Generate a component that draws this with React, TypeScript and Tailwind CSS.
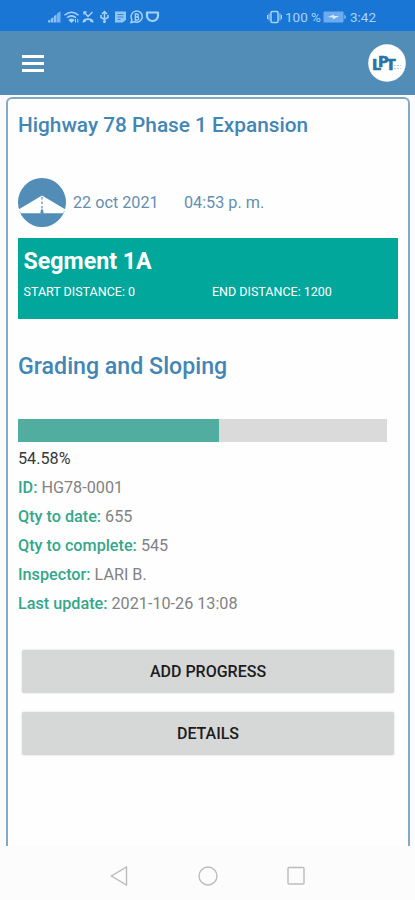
import type { ReactNode } from "react";

interface DetailRow {
  label: string;
  value: string;
}

const details: DetailRow[] = [
  { label: "ID:", value: "HG78-0001" },
  { label: "Qty to date:", value: "655" },
  { label: "Qty to complete:", value: "545" },
  { label: "Inspector:", value: "LARI B." },
  { label: "Last update:", value: "2021-10-26 13:08" },
];

const progress = 54.58;

function StatusBar() {
  return (
    <div className="flex h-[31px] shrink-0 items-center bg-[#1976d5] pt-[2px] pl-[48px] text-[#a9d2fb]">
      {/* Signal, wifi and notification icons */}
      <svg width="112" height="14" viewBox="0 0 112 14" fill="none" stroke="currentColor">
        <g fill="currentColor" stroke="none">
          <path d="M0 12.500v-2l2.500-1v3zM3 12.500V8.500l2.500-1.200v5.200zM6 12.500V6l2.500-1.500v8z" opacity=".8" />
          <path d="M9 12.500V3.500l3.500-2.500v11.500z" opacity=".65" />
        </g>
        <g strokeWidth="1.500">
          <path d="M16.500 5.200q7-6 14 0M19 7.800q4.500-3.800 9 0" />
          <path d="M21.500 10q2-1.500 4 0l-2 2z" fill="currentColor" />
          <path d="M27.500 9v3.500M29.800 9v3.500" strokeWidth="1" />
        </g>
        <path d="M36 2l4 4.500 4.500-4.500M36 4.500v-2.500h2.500" strokeWidth="1.300" />
        <path d="M34.500 12.500q0-4.300 5.500-4.300t5.700 4.300l-3.200-.6-.5-1.700h-4l-.5 1.700z" fill="currentColor" stroke="none" />
        <path d="M56.500 2v9M53 5v2.500l3.500 2 3.500-2V5M54 4l2.500-2.500 2.500 2.500" strokeWidth="1.500" />
        <circle cx="56.500" cy="11.500" r="1.500" fill="currentColor" stroke="none" />
        <path d="M67 1.500h11v8l-3 3h-8z" fill="currentColor" stroke="none" opacity=".85" />
        <path d="M69.500 4.500h6M69.500 7h6M69.500 9.500h3" stroke="#1976d5" strokeWidth=".8" />
        <path d="M83 12.500l.9-3a5.600 5.600 0 1 1 2.500 2.200z" strokeWidth="1.400" />
        <path d="M87.300 4v6h2a1.500 1.500 0 0 0 0-3h-2 1.500a1.500 1.500 0 0 0 0-3z" strokeWidth="1.300" />
        <path d="M99 2.500h11v3.500a5.500 5 0 0 1-11 0z" strokeWidth="2.200" strokeLinejoin="round" />
      </svg>
      <svg className="ml-[107px]" width="15" height="14" viewBox="0 0 15 14" fill="none" stroke="currentColor">
        <rect x="4" y="1.500" width="7" height="11" rx="1" strokeWidth="1.500" />
        <path d="M2 3.500v7M13 3.500v7M.5 5v4M14.500 5v4" />
      </svg>
      <span className="ml-[3px] w-[38px] text-[13.500px] leading-[14px] whitespace-nowrap">100 %</span>
      <svg width="24" height="12" viewBox="0 0 24 12">
        <rect x="0.500" y="0.500" width="20" height="11" rx="1" fill="#6eabec" />
        <path d="M21.500 3.500q2.500 2.500 0 5z" fill="#a9d2fb" />
        <path d="M5 6l6-2.500v1.500h5l-6 3.500v-2z" fill="#d9ecff" />
      </svg>
      <span className="ml-[3px] text-[13.500px] leading-[14px]">3:42</span>
    </div>
  );
}

function AppBar() {
  return (
    <header className="flex h-[64px] shrink-0 items-center justify-between bg-[#528db8] pr-[9px] pl-[22px]">
      <button className="flex w-[22px] flex-col gap-[4px]" aria-label="Open menu">
        <span className="h-[3px] w-full bg-white"></span>
        <span className="h-[3px] w-full bg-white"></span>
        <span className="h-[3px] w-full bg-white"></span>
      </button>
      <svg width="38" height="38" viewBox="0 0 38 38">
        <circle cx="19" cy="19" r="18.800" fill="#fff" />
        <text
          x="4.500"
          y="25.500"
          fill="#2b75a3"
          stroke="#2b75a3"
          strokeWidth=".7"
          fontFamily="Roboto, sans-serif"
          fontWeight="900"
          fontSize="15.500"
          letterSpacing="-2.500"
        >
          L<tspan dy="-2.500">P</tspan><tspan dy="3">T</tspan>
        </text>
        <path d="M26 21.500h7M26 24.500h7" stroke="#c6d1d9" strokeDasharray="2 1" />
      </svg>
    </header>
  );
}

function RoadIcon() {
  return (
    <svg width="48" height="49" viewBox="0 0 48 49">
      <ellipse cx="24" cy="24.500" rx="24" ry="24.500" fill="#528db8" />
      <path d="M24 17.500L47.500 31.500 45 35.200H3L.5 31.500z" fill="#fff" />
      <path d="M24 19v16" stroke="#528db8" strokeWidth="1.200" strokeDasharray="2.500 2" />
      <path d="M23 31.500h2l.7 4h-3.400z" fill="#528db8" />
    </svg>
  );
}

function ActionButton({ children }: { children: ReactNode }) {
  return (
    <button className="h-[43px] w-full rounded-[2px] bg-[#d6d8d7] text-[16px] font-medium text-[#1c1c1c] shadow-[0_0_2px_rgba(0,0,0,0.2)]">
      {children}
    </button>
  );
}

export default function App() {
  return (
    <div className="flex h-[900px] w-[415px] flex-col overflow-hidden bg-white font-[Roboto,sans-serif]">
      <StatusBar />
      <AppBar />

      {/* Activity card, runs off under the navigation bar */}
      <main className="flex flex-1 flex-col bg-[#fbfafd] px-[5.500px] pt-[2px]">
        <section className="flex-1 rounded-t-[6px] border-2 border-b-0 border-[#84a9c6] bg-[#fefefe] pr-[9px] pl-[10.500px]">
          <h1 className="pt-[14px] text-[20.800px] leading-[24px] font-medium whitespace-nowrap text-[#4386b5]">
            Highway 78 Phase 1 Expansion
          </h1>

          <div className="mt-[41px] flex items-center text-[16.200px] text-[#658fb1]">
            <RoadIcon />
            <span className="ml-[7px] w-[111px] pt-[2px]">22 oct 2021</span>
            <span className="pt-[2px]">04:53 p. m.</span>
          </div>

          <div className="mt-[11px] h-[81px] w-[380px] bg-[#02a79c] px-[5.500px] text-white">
            <h2 className="pt-[9px] text-[23.200px] leading-[28px] font-bold">Segment 1A</h2>
            <div className="mt-[9px] flex text-[12.500px] leading-[16px]">
              <span className="w-[188.500px]">START DISTANCE: 0</span>
              <span>END DISTANCE: 1200</span>
            </div>
          </div>

          <h2 className="mt-[33px] text-[23.200px] leading-[28px] font-medium text-[#4386b5]">
            Grading and Sloping
          </h2>

          <div className="mt-[39px] h-[23px] w-[369px] bg-[#dadada]">
            <div className="h-full bg-[#51ad9f]" style={{ width: `${progress}%` }}></div>
          </div>

          <div className="mt-[3px] text-[16.200px] leading-[28.900px] text-[#828282]">
            <p className="text-[#383838]">{progress}%</p>
            {details.map((row) => (
              <p key={row.label}>
                <span className="font-medium text-[#35a78c]">{row.label}</span> {row.value}
              </p>
            ))}
          </div>

          <div className="mt-[32px] ml-[4px] flex w-[372px] flex-col gap-[19px]">
            <ActionButton>ADD PROGRESS</ActionButton>
            <ActionButton>DETAILS</ActionButton>
          </div>
        </section>
      </main>

      {/* Android navigation bar */}
      <nav className="flex h-[54px] shrink-0 items-center justify-center bg-[#fcfcfc] pt-[5px]">
        <svg width="200" height="22" viewBox="0 0 200 22" fill="none" stroke="#bcbcbc" strokeWidth="1.400">
          <path d="M18.500 2v18L3.500 11z" />
          <circle cx="100" cy="11" r="9" />
          <rect x="180" y="2.500" width="16" height="16.500" rx="1" />
        </svg>
      </nav>
    </div>
  );
}
